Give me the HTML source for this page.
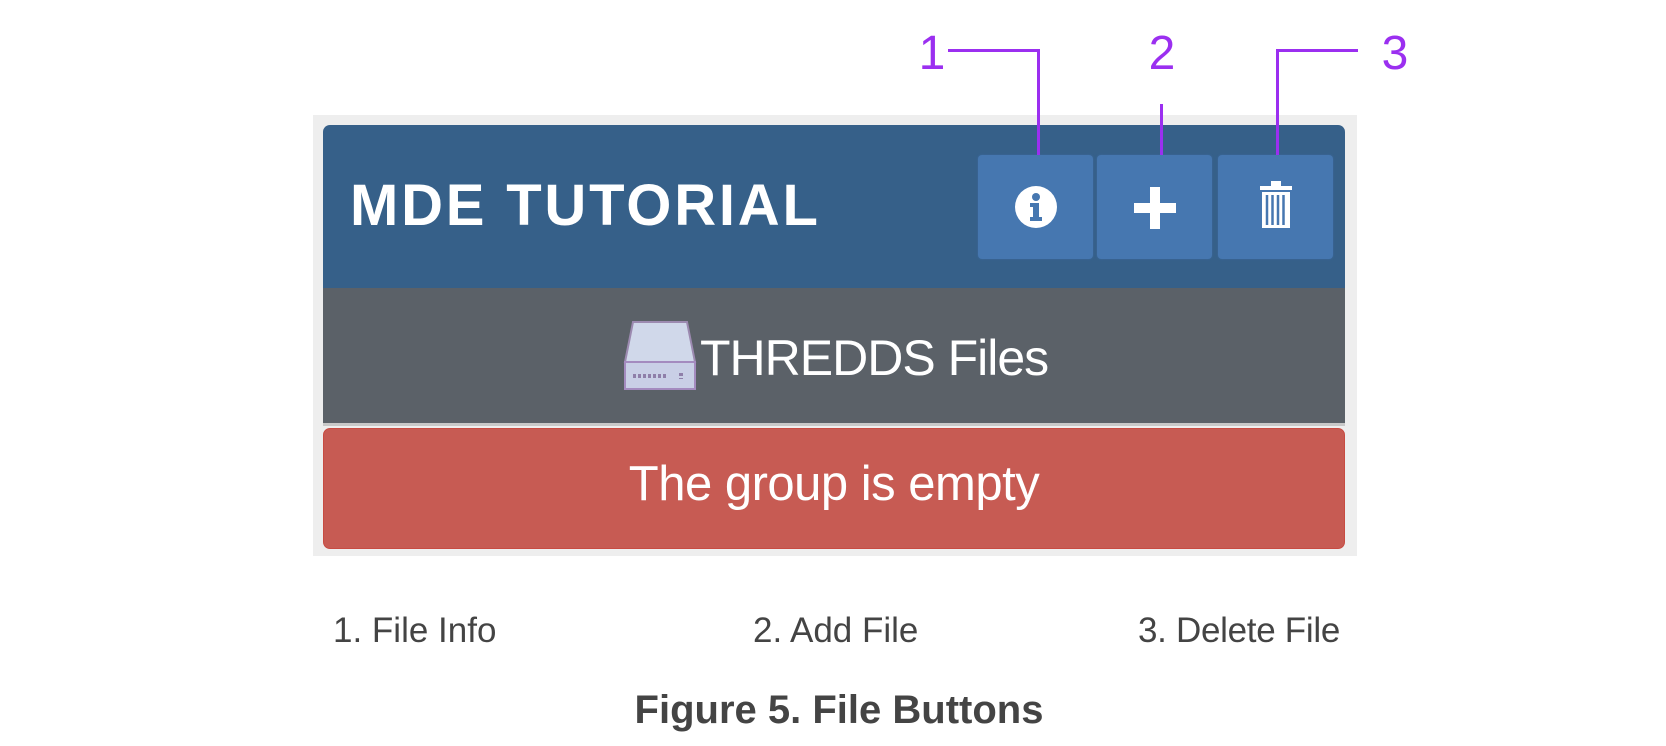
<!DOCTYPE html>
<html><head><meta charset="utf-8"><style>
body{margin:0;width:1666px;height:746px;background:#fff;position:relative;overflow:hidden;font-family:"Liberation Sans",Arial,sans-serif}
.a{position:absolute}
.num{position:absolute;color:#9b2ff0;font-size:48px;line-height:48px;font-weight:300;transform:translateX(-50%)}
.ln{position:absolute;background:#9b2ff0}
.btn{position:absolute;top:155px;width:115px;height:104px;background:#4677b0;border-radius:4px;box-shadow:0 0 2px #3d6aa0}
.cap{position:absolute;top:611px;font-size:35px;color:#444;line-height:40px}
</style></head><body>
<div class="a" style="left:313px;top:115px;width:1044px;height:441px;background:#eeeeee"></div>
<div class="a" style="left:323px;top:125px;width:1022px;height:163px;background:#366089;border-radius:7px 7px 0 0"></div>
<div class="a" style="left:350px;top:176px;font-size:58px;font-weight:bold;color:#fff;letter-spacing:2.8px;line-height:60px">MDE TUTORIAL</div>
<div class="btn" style="left:978px"></div>
<div class="btn" style="left:1097px"></div>
<div class="btn" style="left:1218px"></div>
<svg class="a" style="left:1015px;top:186px" width="42" height="42" viewBox="0 0 42 42"><circle cx="21" cy="21" r="21" fill="#fff"/><circle cx="21" cy="11" r="4" fill="#4677b0"/><path d="M15 17h9v14h3v4H15v-4h3v-10h-3z" fill="#4677b0"/></svg>
<svg class="a" style="left:1134px;top:187px" width="42" height="42" viewBox="0 0 42 42"><path d="M16 0h10v16h16v10H26v16H16V26H0V16h16z" fill="#fff"/></svg>
<svg class="a" style="left:1258px;top:180px" width="36" height="50" viewBox="0 0 36 50"><path d="M13 1h10v5h11v4H2V6h11z" fill="#fff"/><path d="M4 12h28v36H4z" fill="#fff"/><path d="M9 15v30M14.5 15v30M20 15v30M25.5 15v30" stroke="#4677b0" stroke-width="2.5"/></svg>
<div class="a" style="left:323px;top:288px;width:1022px;height:135px;background:#5b6168;border-bottom:3px solid #c8c8c8"></div>
<svg class="a" style="left:623px;top:320px" width="76" height="71" viewBox="0 0 76 71"><path d="M10 2h54l8 40H2z" fill="#d0d8ea" stroke="#9c8ab0" stroke-width="2"/><rect x="2" y="42" width="70" height="27" fill="#c9cfe6" stroke="#a48bbf" stroke-width="2"/><path d="M10 56h34M58 53v6" stroke="#8f7fa9" stroke-width="4" stroke-dasharray="3 2"/></svg>
<div class="a" style="left:700px;top:330px;font-size:50px;color:#fff;line-height:56px;letter-spacing:-1px">THREDDS Files</div>
<div class="a" style="left:323px;top:428px;width:1020px;height:119px;background:#c75b53;border:1px solid #c84b42;border-radius:7px"></div>
<div class="a" style="left:323px;top:456px;width:1022px;text-align:center;font-size:49px;color:#fff;line-height:56px;letter-spacing:-0.5px">The group is empty</div>
<div class="num" style="left:932px;top:30px">1</div>
<div class="num" style="left:1162px;top:30px">2</div>
<div class="num" style="left:1395px;top:30px">3</div>
<div class="ln" style="left:948px;top:49px;width:92px;height:3px"></div>
<div class="ln" style="left:1037px;top:49px;width:3px;height:106px"></div>
<div class="ln" style="left:1160px;top:104px;width:3px;height:51px"></div>
<div class="ln" style="left:1276px;top:49px;width:3px;height:106px"></div>
<div class="ln" style="left:1276px;top:49px;width:82px;height:3px"></div>
<div class="cap" style="left:333px">1. File Info</div>
<div class="cap" style="left:753px">2. Add File</div>
<div class="cap" style="left:1138px;letter-spacing:-0.3px">3. Delete File</div>
<div class="a" style="left:0;width:1666px;top:687px;text-align:center;font-size:40px;font-weight:bold;color:#444;line-height:46px;padding-left:12px;box-sizing:border-box">Figure 5. File Buttons</div>
</body></html>
